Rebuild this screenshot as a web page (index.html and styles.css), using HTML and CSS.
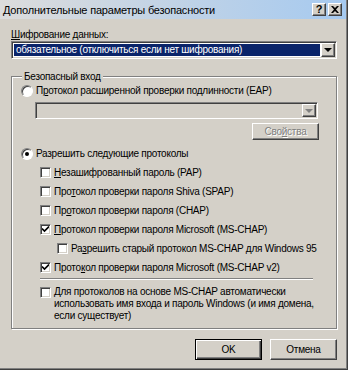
FILE: index.html
```html
<!DOCTYPE html>
<html>
  <head>
    <title>Дополнительные параметры безопасности</title>
    <meta charset="UTF-8" />
    <link rel="stylesheet" href="styles.css">
  </head>

  <body>
    <div class="window">
      <div class="titlebar">
        <span class="title_text">Дополнительные параметры безопасности</span>
        <div class="caption_buttons">
          <span class="caption_btn">?</span>
          <span class="caption_btn close">
            <svg width="8" height="7" viewBox="0 0 8 7">
              <path d="M0 0h2l2 2l2 -2h2l-3 3.5l3 3.5h-2l-2 -2l-2 2h-2l3 -3.5z" fill="#000" />
            </svg>
          </span>
        </div>
      </div>

      <div class="content">
        <div class="field_label"><u>Ш</u>ифрование данных:</div>
        <div class="combo">
          <span class="combo_value selected">обязательное (отключиться если нет шифрования)</span>
          <span class="combo_arrow"><span class="arrow"></span></span>
        </div>

        <fieldset class="group">
          <legend>Безопасный вход</legend>

          <div class="option_row">
            <span class="radio"></span>
            <span>П<u>р</u>отокол расширенной проверки подлинности (EAP)</span>
          </div>
          <div class="combo combo_disabled">
            <span class="combo_value"></span>
            <span class="combo_arrow"><span class="arrow"></span></span>
          </div>
          <div class="props_row">
            <span class="btn btn_disabled">Сво<u>й</u>ства</span>
          </div>

          <div class="option_row">
            <span class="radio checked"></span>
            <span>Разрешить следующие протоколы</span>
          </div>

          <div class="check_list">
            <div class="check_row">
              <span class="check"></span>
              <span><u>Н</u>езашифрованный пароль (PAP)</span>
            </div>
            <div class="check_row">
              <span class="check"></span>
              <span>Про<u>т</u>окол проверки пароля Shiva (SPAP)</span>
            </div>
            <div class="check_row">
              <span class="check"></span>
              <span>Пр<u>о</u>токол проверки пароля (CHAP)</span>
            </div>
            <div class="check_row">
              <span class="check checked">
                <svg width="7" height="7" viewBox="0 0 7 7">
                  <path d="M0 2.5l2.5 2.5l4.5 -4.5" fill="none" stroke="#000" stroke-width="1.6" />
                </svg>
              </span>
              <span><u>П</u>ротокол проверки пароля Microsoft (MS-CHAP)</span>
            </div>
            <div class="check_row nested">
              <span class="check"></span>
              <span>Ра<u>з</u>решить старый протокол MS-CHAP для Windows 95</span>
            </div>
            <div class="check_row">
              <span class="check checked">
                <svg width="7" height="7" viewBox="0 0 7 7">
                  <path d="M0 2.5l2.5 2.5l4.5 -4.5" fill="none" stroke="#000" stroke-width="1.6" />
                </svg>
              </span>
              <span>Прото<u>к</u>ол проверки пароля Microsoft (MS-CHAP v2)</span>
            </div>

            <div class="separator"></div>

            <div class="check_row multiline">
              <span class="check"></span>
              <span><u>Д</u>ля протоколов на основе MS-CHAP автоматически<br />использовать имя входа и пароль Windows (и имя домена,<br />если существует)</span>
            </div>
          </div>
        </fieldset>

        <div class="actions">
          <span class="btn btn_default">OK</span>
          <span class="btn">Отмена</span>
        </div>
      </div>
    </div>
  </body>
</html>
```

FILE: styles.css
```css
body {
  margin: 0;
  background: #d4d0c8;
}

.window {
  width: 348px;
  height: 370px;
  box-sizing: border-box;
  background: #d4d0c8;
  border-right: 1px solid #404040;
  border-bottom: 1px solid #404040;
  box-shadow: inset -1px -1px 0 #808080;
  display: flex;
  flex-direction: column;
  font-family: "Liberation Sans", Arial, sans-serif;
  font-size: 10px;
  letter-spacing: -0.25px;
  color: #000;
  overflow: hidden;
}

.titlebar {
  height: 19px;
  flex-shrink: 0;
  margin-right: 1px;
  display: flex;
  align-items: center;
  justify-content: space-between;
  padding: 0 4px 0 3px;
  background: linear-gradient(to right, #dcdcdc, #a6caf0);
}

.title_text {
  font-size: 11px;
  letter-spacing: -0.2px;
  white-space: nowrap;
}

.caption_buttons {
  display: flex;
  gap: 2px;
}

.caption_btn {
  width: 12px;
  height: 11px;
  display: flex;
  align-items: center;
  justify-content: center;
  background: #d4d0c8;
  border: 1px solid;
  border-color: #fff #404040 #404040 #fff;
  box-shadow: inset -1px -1px 0 #808080;
  font-weight: bold;
  font-size: 11px;
  line-height: 11px;
  letter-spacing: 0;
}

.content {
  padding: 9px 10px 0 11px;
  display: flex;
  flex-direction: column;
}

.field_label {
  line-height: 13px;
}

.combo {
  height: 18px;
  flex-shrink: 0;
  box-sizing: border-box;
  display: flex;
  background: #fff;
  border: 1px solid;
  border-color: #808080 #fff #fff #808080;
  box-shadow: inset 1px 1px 0 #404040, inset -1px -1px 0 #d4d0c8;
  padding: 1px;
}

.combo_value {
  flex: 1;
  line-height: 14px;
  padding-left: 2px;
  white-space: nowrap;
}

.combo_value.selected {
  background: #0a246a;
  color: #fff;
  margin: 1px;
  line-height: 12px;
}

.combo_arrow {
  width: 14px;
  box-sizing: border-box;
  display: flex;
  align-items: center;
  justify-content: center;
  background: #d4d0c8;
  border: 1px solid;
  border-color: #fff #404040 #404040 #fff;
  box-shadow: inset -1px -1px 0 #808080;
}

.arrow {
  width: 0;
  height: 0;
  border-left: 4px solid transparent;
  border-right: 4px solid transparent;
  border-top: 4px solid #000;
}

.combo_disabled {
  width: 283px;
  height: 17px;
  margin-top: 5px;
  margin-left: 14px;
  background: #d4d0c8;
}

.combo_disabled .arrow {
  border-top-color: #808080;
}

.group {
  margin: 11px 0 0 0;
  padding: 1px 17px 6px 9px;
  border: 1px solid #808080;
  box-shadow: inset 1px 1px 0 #fff, 1px 1px 0 #fff;
  min-width: 0;
}

.group legend {
  padding: 0 2px;
  margin-left: 1px;
  line-height: 13px;
  background: #d4d0c8;
}

.option_row {
  display: flex;
  align-items: center;
  gap: 3px;
  height: 13px;
}

.radio {
  width: 10px;
  height: 10px;
  border-radius: 50%;
  background: #fff;
  border: 1px solid;
  border-color: #808080 #fff #fff #808080;
  box-shadow: inset 1px 1px 0 #404040;
  position: relative;
}

.radio.checked::after {
  content: "";
  position: absolute;
  left: 3px;
  top: 3px;
  width: 4px;
  height: 4px;
  border-radius: 50%;
  background: #000;
}

.props_row {
  display: flex;
  justify-content: flex-end;
  margin-top: 4px;
  margin-bottom: 7px;
}

.btn {
  width: 67px;
  height: 21px;
  box-sizing: border-box;
  display: flex;
  align-items: center;
  justify-content: center;
  background: #d4d0c8;
  border: 1px solid;
  border-color: #fff #404040 #404040 #fff;
  box-shadow: inset -1px -1px 0 #808080;
}

.btn_disabled {
  height: 17px;
  color: #808080;
  text-shadow: 1px 1px 0 #fff;
}

.btn_default {
  border-color: #000;
  box-shadow: inset 1px 1px 0 #fff, inset -1px -1px 0 #404040, inset -2px -2px 0 #808080;
}

.check_list {
  display: flex;
  flex-direction: column;
  padding-left: 19px;
  margin-top: 3px;
}

.check_row {
  display: flex;
  align-items: center;
  gap: 3px;
  height: 19px;
  white-space: nowrap;
}

.check_row.nested {
  padding-left: 17px;
}

.check {
  width: 11px;
  height: 11px;
  box-sizing: border-box;
  flex-shrink: 0;
  display: flex;
  align-items: center;
  justify-content: center;
  background: #fff;
  border: 1px solid;
  border-color: #808080 #fff #fff #808080;
  box-shadow: inset 1px 1px 0 #404040, inset -1px -1px 0 #d4d0c8;
}

.separator {
  height: 0;
  margin: 1px 6px 4px 0;
  border-top: 1px solid #808080;
  border-bottom: 1px solid #fff;
}

.check_row.multiline {
  height: auto;
  align-items: flex-start;
  line-height: 12px;
  margin-top: 2px;
}

.check_row.multiline .check {
  margin-top: 1px;
}

.actions {
  display: flex;
  justify-content: flex-end;
  gap: 8px;
  margin-top: 10px;
}
```
